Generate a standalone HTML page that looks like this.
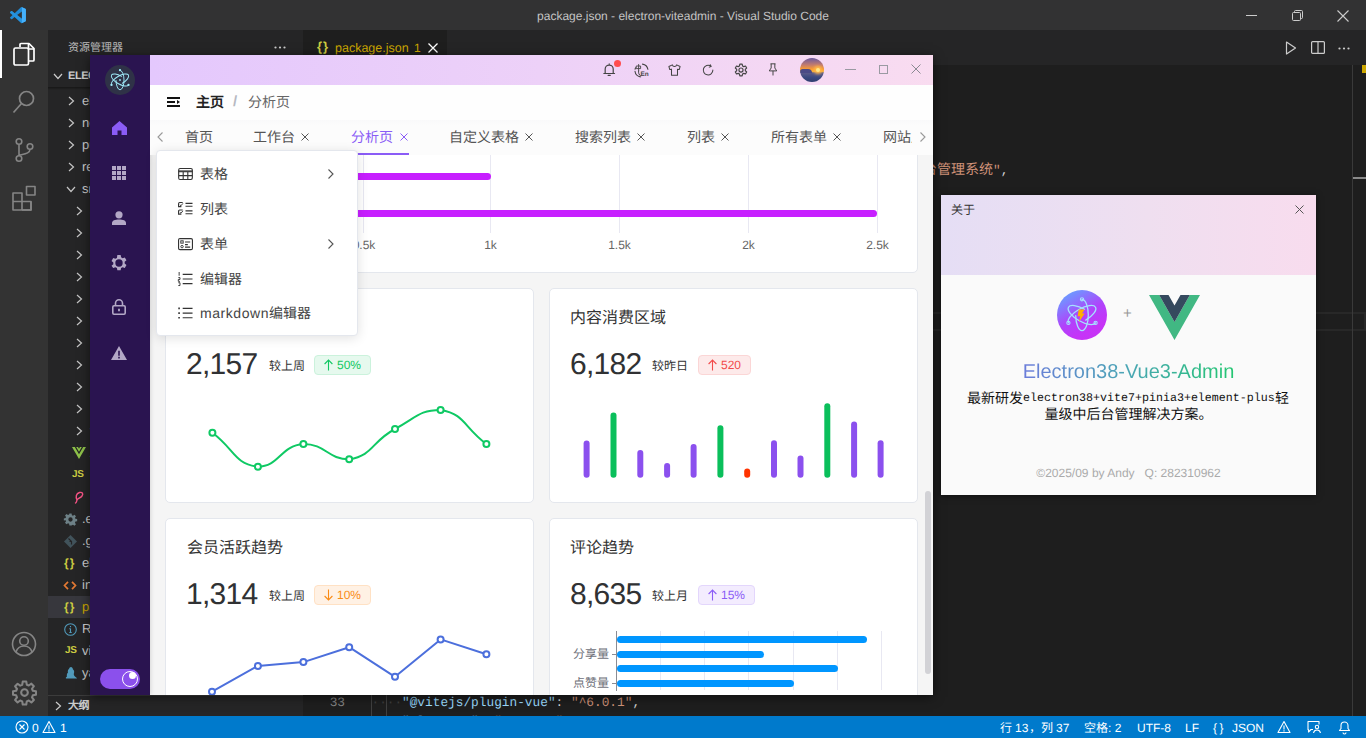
<!DOCTYPE html>
<html lang="zh-CN">
<head>
<meta charset="utf-8">
<title>package.json - electron-viteadmin - Visual Studio Code</title>
<style>
*{box-sizing:border-box;margin:0;padding:0}
html,body{width:1366px;height:738px;overflow:hidden;background:#1e1e1e}
body{position:relative;font-family:"Liberation Sans",sans-serif;font-size:13px;color:#ccc;text-rendering:geometricPrecision}
.abs{position:absolute}
svg{display:block;overflow:visible}
/* ---------- VS Code chrome ---------- */
#titlebar{left:0;top:0;width:1366px;height:30px;background:#323233}
#title{left:0;top:0;width:1366px;height:30px;line-height:33px;text-align:center;font-size:12px;color:#c4c4c4;white-space:nowrap}
#activity{left:0;top:30px;width:48px;height:686px;background:#333333}
#activity .ind{left:0;top:0;width:2px;height:48px;background:#fff}
#sidebar{left:48px;top:30px;width:255px;height:686px;background:#252526;overflow:hidden}
#sidebar .hd{left:20px;top:10px;font-size:11px;line-height:16px;color:#bbbbbb;white-space:nowrap}
#sidebar .sec{left:0;width:255px;height:22px;font-size:11px;letter-spacing:-.45px;font-weight:bold;color:#cccccc;line-height:22px;white-space:nowrap}
.row{position:absolute;left:0;width:255px;height:22px;line-height:22px;font-size:13px;color:#cccccc;white-space:nowrap}
.row .t{position:absolute;left:34px;top:0}
.row.sel{background:#37373d}
.chev{position:absolute;top:6px;width:10px;height:10px}
#tabsbar{left:303px;top:30px;width:1063px;height:35px;background:#252526}
#tab1{left:0;top:0;width:144px;height:35px;background:#1e1e1e}
#editor{left:303px;top:65px;width:1063px;height:651px;background:#1e1e1e;overflow:hidden}
.code{position:absolute;font-family:"Liberation Mono",monospace;font-size:12.8px;line-height:19px;white-space:pre;height:19px}
#status{left:0;top:716px;width:1366px;height:22px;background:#007acc;color:#fff;font-size:12px;line-height:22px;white-space:nowrap}
#status span{position:absolute;top:1px}
</style>
</head>
<body>

<!-- ================= VS CODE ================= -->
<div id="titlebar" class="abs"></div>
<div id="title" class="abs">package.json - electron-viteadmin - Visual Studio Code</div>
<!-- vscode logo -->
<svg class="abs" style="left:10px;top:7px" width="15.900" height="16.200" viewBox="0 0 100 100" preserveAspectRatio="none"><path fill="#1f8ad6" d="M96.500 10.800 75.900.9a6.200 6.200 0 0 0-7.100 1.200L29.400 38 12.200 25a4.200 4.200 0 0 0-5.300.2l-5.500 5a4.200 4.200 0 0 0 0 6.200L16.300 50 1.400 63.600a4.200 4.200 0 0 0 0 6.200l5.500 5a4.200 4.200 0 0 0 5.300.2l17.200-13 39.400 35.900a6.200 6.200 0 0 0 7.100 1.200l20.600-9.900a6.200 6.200 0 0 0 3.500-5.600V16.400a6.200 6.200 0 0 0-3.500-5.600zM75 72.700 45.100 50 75 27.300z"/><path fill="#2a9bea" d="M29.400 62 68.800 97.900a6.200 6.200 0 0 0 7.100 1.200L75 72.700 45.100 50 29.400 38 12.200 25a4.200 4.200 0 0 0-5.300.2l-5.500 5a4.200 4.200 0 0 0 0 6.200z" opacity=".55"/><path fill="#45b0fb" d="M75 .6a6.200 6.200 0 0 1 .9.300l20.600 9.900a6.200 6.200 0 0 1 3.500 5.600v67.200a6.200 6.200 0 0 1-3.500 5.600l-20.600 9.900a6.200 6.200 0 0 1-.9.300z"/></svg>
<!-- window controls -->
<svg class="abs" style="left:1246px;top:15px" width="11" height="1"><rect width="11" height="1" fill="#ccc"/></svg>
<svg class="abs" style="left:1292px;top:10px" width="11" height="11" viewBox="0 0 11 11" fill="none" stroke="#ccc" stroke-width="1"><rect x=".5" y="2.500" width="8" height="8" rx="1"/><path d="M2.500 2.500V1.500a1 1 0 0 1 1-1h6a1 1 0 0 1 1 1v6a1 1 0 0 1-1 1h-1"/></svg>
<svg class="abs" style="left:1337px;top:10px" width="12" height="12" viewBox="0 0 12 12" stroke="#ccc" stroke-width="1.1"><path d="M.5.5l11 11M11.500.5l-11 11"/></svg>

<!-- activity bar -->
<div id="activity" class="abs">
  <div class="ind abs"></div>
  <!-- files -->
  <svg class="abs" style="left:12px;top:11px" width="24" height="26" viewBox="0 0 24 26" fill="none" stroke="#fff" stroke-width="1.700" stroke-linejoin="round"><path d="M8 6V3.500a1 1 0 0 1 1-1h8l5 5v11.500a1 1 0 0 1-1 1h-4"/><path d="M16.500 2.500v5.500h5.500"/><rect x="2" y="7" width="14.500" height="17" rx="1.500"/></svg>
  <!-- search -->
  <svg class="abs" style="left:12px;top:59px" width="24" height="26" viewBox="0 0 24 26" fill="none" stroke="#858585" stroke-width="1.700"><circle cx="14.500" cy="9.500" r="7"/><path d="M9.500 14.500 1.500 23.500"/></svg>
  <!-- scm -->
  <svg class="abs" style="left:12px;top:107px" width="24" height="26" viewBox="0 0 24 26" fill="none" stroke="#858585" stroke-width="1.600"><circle cx="7" cy="4.500" r="2.800"/><circle cx="7" cy="21.500" r="2.800"/><circle cx="18" cy="9.500" r="2.800"/><path d="M7 7.300v11.400M18 12.300c0 4-5 4.500-11 6"/></svg>
  <!-- extensions -->
  <svg class="abs" style="left:11px;top:155px" width="26" height="26" viewBox="0 0 26 26" fill="none" stroke="#858585" stroke-width="1.600" stroke-linejoin="round"><path d="M2 8h9v17H2zM2 16.500h18V25H11M11 16.500V25"/><rect x="15.500" y="1.500" width="8.500" height="8.500"/><path d="M20 16.500V25h-9"/></svg>
  <!-- account -->
  <svg class="abs" style="left:11px;top:601px" width="26" height="26" viewBox="0 0 26 26" fill="none" stroke="#858585" stroke-width="1.600"><circle cx="13" cy="13" r="11.500"/><circle cx="13" cy="10" r="4.300"/><path d="M5 21c1.500-4.500 4.500-6 8-6s6.500 1.500 8 6"/></svg>
  <!-- gear -->
  <svg class="abs" style="left:11.500px;top:649.500px" width="25" height="25" viewBox="0 0 24 24" fill="none" stroke="#858585" stroke-width="2" stroke-linejoin="round"><circle cx="12" cy="12" r="3.200"/><path d="M10.300 1.500h3.400l.5 3 1.900.8 2.500-1.800 2.400 2.400-1.800 2.500.8 1.900 3 .5v3.400l-3 .5-.8 1.900 1.800 2.500-2.400 2.400-2.500-1.800-1.900.8-.5 3h-3.400l-.5-3-1.900-.8-2.500 1.800-2.400-2.400 1.800-2.500-.8-1.900-3-.5v-3.400l3-.5.800-1.900L3 6l2.400-2.400 2.500 1.800 1.900-.8z"/></svg>
</div>

<!-- side bar (explorer) -->
<div id="sidebar" class="abs">
  <div class="hd abs">资源管理器</div>
  <svg class="abs" style="left:226px;top:16px" width="12" height="3"><circle cx="1.500" cy="1.500" r="1.100" fill="#ccc"/><circle cx="6" cy="1.500" r="1.100" fill="#ccc"/><circle cx="10.500" cy="1.500" r="1.100" fill="#ccc"/></svg>
  <div class="sec abs" style="top:35px"><svg class="chev" style="left:5px" viewBox="0 0 10 10" fill="none" stroke="#ccc" stroke-width="1.200"><path d="M1 3l4 4.500L9 3"/></svg><span class="abs" style="left:20px">ELECTRON-VITEADMIN</span></div>
  <div class="abs" style="left:0;top:57px;width:255px;height:3px;background:linear-gradient(#0006,#0000)"></div>
  <div class="row" style="top:60px"><svg class="chev" style="left:18px" viewBox="0 0 10 10" fill="none" stroke="#c5c5c5" stroke-width="1.200"><path d="M3 1l4.500 4L3 9"/></svg><span class="t">electron</span></div>
  <div class="row" style="top:82px"><svg class="chev" style="left:18px" viewBox="0 0 10 10" fill="none" stroke="#c5c5c5" stroke-width="1.200"><path d="M3 1l4.500 4L3 9"/></svg><span class="t">node_modules</span></div>
  <div class="row" style="top:104px"><svg class="chev" style="left:18px" viewBox="0 0 10 10" fill="none" stroke="#c5c5c5" stroke-width="1.200"><path d="M3 1l4.500 4L3 9"/></svg><span class="t">public</span></div>
  <div class="row" style="top:126px"><svg class="chev" style="left:18px" viewBox="0 0 10 10" fill="none" stroke="#c5c5c5" stroke-width="1.200"><path d="M3 1l4.500 4L3 9"/></svg><span class="t">resources</span></div>
  <div class="row" style="top:148px"><svg class="chev" style="left:18px" viewBox="0 0 10 10" fill="none" stroke="#c5c5c5" stroke-width="1.200"><path d="M1 3l4 4.500L9 3"/></svg><span class="t">src</span></div>
  <div class="row" style="top:170px"><svg class="chev" style="left:26px" viewBox="0 0 10 10" fill="none" stroke="#c5c5c5" stroke-width="1.200"><path d="M3 1l4.500 4L3 9"/></svg><span class="t" style="left:42px">api</span></div>
  <div class="row" style="top:192px"><svg class="chev" style="left:26px" viewBox="0 0 10 10" fill="none" stroke="#c5c5c5" stroke-width="1.200"><path d="M3 1l4.500 4L3 9"/></svg><span class="t" style="left:42px">assets</span></div>
  <div class="row" style="top:214px"><svg class="chev" style="left:26px" viewBox="0 0 10 10" fill="none" stroke="#c5c5c5" stroke-width="1.200"><path d="M3 1l4.500 4L3 9"/></svg><span class="t" style="left:42px">components</span></div>
  <div class="row" style="top:236px"><svg class="chev" style="left:26px" viewBox="0 0 10 10" fill="none" stroke="#c5c5c5" stroke-width="1.200"><path d="M3 1l4.500 4L3 9"/></svg><span class="t" style="left:42px">config</span></div>
  <div class="row" style="top:258px"><svg class="chev" style="left:26px" viewBox="0 0 10 10" fill="none" stroke="#c5c5c5" stroke-width="1.200"><path d="M3 1l4.500 4L3 9"/></svg><span class="t" style="left:42px">hooks</span></div>
  <div class="row" style="top:280px"><svg class="chev" style="left:26px" viewBox="0 0 10 10" fill="none" stroke="#c5c5c5" stroke-width="1.200"><path d="M3 1l4.500 4L3 9"/></svg><span class="t" style="left:42px">layouts</span></div>
  <div class="row" style="top:302px"><svg class="chev" style="left:26px" viewBox="0 0 10 10" fill="none" stroke="#c5c5c5" stroke-width="1.200"><path d="M3 1l4.500 4L3 9"/></svg><span class="t" style="left:42px">locale</span></div>
  <div class="row" style="top:324px"><svg class="chev" style="left:26px" viewBox="0 0 10 10" fill="none" stroke="#c5c5c5" stroke-width="1.200"><path d="M3 1l4.500 4L3 9"/></svg><span class="t" style="left:42px">router</span></div>
  <div class="row" style="top:346px"><svg class="chev" style="left:26px" viewBox="0 0 10 10" fill="none" stroke="#c5c5c5" stroke-width="1.200"><path d="M3 1l4.500 4L3 9"/></svg><span class="t" style="left:42px">store</span></div>
  <div class="row" style="top:368px"><svg class="chev" style="left:26px" viewBox="0 0 10 10" fill="none" stroke="#c5c5c5" stroke-width="1.200"><path d="M3 1l4.500 4L3 9"/></svg><span class="t" style="left:42px">utils</span></div>
  <div class="row" style="top:390px"><svg class="chev" style="left:26px" viewBox="0 0 10 10" fill="none" stroke="#c5c5c5" stroke-width="1.200"><path d="M3 1l4.500 4L3 9"/></svg><span class="t" style="left:42px">views</span></div>
  <div class="row" style="top:412px"><svg class="abs" style="left:24px;top:5px" width="14" height="12" viewBox="0 0 14 12"><path fill="#8dc149" d="M0 0h2.800L7 7.200 11.200 0H14L7 12z"/><path fill="#8dc149" d="M4.200 0H6L7 1.800 8 0h1.800L7 4.800z"/></svg><span class="t" style="left:42px">App.vue</span></div>
  <div class="row" style="top:434px"><span class="abs" style="left:24px;top:0;font-size:10px;font-weight:bold;color:#cbcb41;letter-spacing:-.3px">JS</span><span class="t" style="left:42px">main.js</span></div>
  <div class="row" style="top:456px"><svg class="abs" style="left:26px;top:5px" width="10" height="13" viewBox="0 0 10 13" fill="none" stroke="#f55385" stroke-width="1.400" stroke-linecap="round"><path d="M3 9C1.500 6 2 2.500 5.500 1.500 8.500.8 9.500 3 8 5 6.500 7 3.500 7.500 3 9c-.5 1.500-.5 3-1.500 3"/></svg><span class="t" style="left:42px">style.scss</span></div>
  <div class="row" style="top:478px"><svg class="abs" style="left:16px;top:5px" width="13" height="13" viewBox="0 0 24 24"><path fill="#6d8086" fill-rule="evenodd" d="M10 1h4l.6 3.200 2 .9 2.700-1.900 2.800 2.800-1.900 2.700.9 2 3.200.6v4l-3.200.6-.9 2 1.900 2.700-2.800 2.800-2.700-1.900-2 .9L14 23h-4l-.6-3.200-2-.9-2.700 1.900-2.800-2.800 1.900-2.700-.9-2L-.3 14v-4l3.200-.6.900-2L1.900 4.700 4.700 1.900l2.700 1.900 2-.9zM12 8a4 4 0 1 0 0 8 4 4 0 0 0 0-8z"/></svg><span class="t" style="color:#cccccc">.editorconfig</span></div>
  <div class="row" style="top:500px"><svg class="abs" style="left:16px;top:5px" width="13" height="13" viewBox="0 0 13 13"><path fill="#41535b" d="M6.500 0L13 6.500 6.500 13 0 6.500z"/><path stroke="#252526" stroke-width="1.200" fill="none" d="M4.500 3.500l3 3v3M7.500 6.500h-2"/></svg><span class="t" style="color:#cccccc">.gitignore</span></div>
  <div class="row" style="top:522px"><span class="abs" style="left:16px;top:0;font-size:12px;font-weight:bold;color:#cbcb41;letter-spacing:1px">{}</span><span class="t" style="color:#cccccc">electron-builder.json</span></div>
  <div class="row" style="top:544px"><svg class="abs" style="left:15px;top:7px" width="14" height="9" viewBox="0 0 14 9" fill="none" stroke="#e37933" stroke-width="1.700"><path d="M5 .8L1.500 4.500 5 8.200M9 .8l3.500 3.700L9 8.200"/></svg><span class="t" style="color:#cccccc">index.html</span></div>
  <div class="row sel" style="top:566px"><span class="abs" style="left:16px;top:0;font-size:12px;font-weight:bold;color:#cbcb41;letter-spacing:1px">{}</span><span class="t" style="color:#cca700">package.json</span></div>
  <div class="row" style="top:588px"><svg class="abs" style="left:16px;top:5px" width="13" height="13" viewBox="0 0 13 13" fill="none" stroke="#519aba" stroke-width="1.100"><circle cx="6.500" cy="6.500" r="5.800"/><path d="M6.500 5.500v4M5.300 5.800h1.200M5.300 9.500h2.400M6.500 3v1.200" /></svg><span class="t" style="color:#cccccc">README.md</span></div>
  <div class="row" style="top:610px"><span class="abs" style="left:17px;top:0;font-size:10px;font-weight:bold;color:#cbcb41;letter-spacing:-.3px">JS</span><span class="t" style="color:#cccccc">vite.config.js</span></div>
  <div class="row" style="top:632px"><svg class="abs" style="left:17px;top:5px" width="12" height="13" viewBox="0 0 12 13"><path fill="#519aba" d="M6 0c1 0 1.800 1 2 2.500C9 3 9.500 4.500 9 6c-.3 1-.3 2 .5 3 1 1.200 2 1.500 2.500 2.500H1C.5 11 1 10 2 9.500 1.500 8 2 6.500 3 5.500 2.500 4 3 2.500 4 2 4.300.8 5 0 6 0z"/></svg><span class="t" style="color:#cccccc">yarn.lock</span></div>
  <div class="abs" style="left:0;top:665px;width:255px;height:1px;background:#3c3c3c"></div>
  <div class="sec abs" style="top:665px"><svg class="chev" style="left:5px" viewBox="0 0 10 10" fill="none" stroke="#ccc" stroke-width="1.200"><path d="M3 1l4.500 4L3 9"/></svg><span class="abs" style="left:20px">大纲</span></div>
</div>

<!-- editor tabs -->
<div id="tabsbar" class="abs">
  <div id="tab1" class="abs">
    <span class="abs" style="left:14px;top:9px;font-size:13px;font-weight:bold;color:#cbcb41;line-height:16px;letter-spacing:1px">{}</span>
    <span class="abs" style="left:32px;top:10px;font-size:12.500px;color:#cca700;line-height:16px;white-space:nowrap">package.json</span>
    <span class="abs" style="left:111px;top:10px;font-size:12px;color:#cca700;line-height:16px">1</span>
    <svg class="abs" style="left:125px;top:13px" width="10" height="10" stroke="#fff" stroke-width="1.300"><path d="M.5.5l9 9M9.500.5l-9 9"/></svg>
  </div>
  <!-- editor actions -->
  <svg class="abs" style="left:982px;top:11px" width="12" height="14" fill="none" stroke="#ccc" stroke-width="1.200" stroke-linejoin="round"><path d="M1.500 1l9 6-9 6z"/></svg>
  <svg class="abs" style="left:1008px;top:11px" width="14" height="13" fill="none" stroke="#ccc" stroke-width="1.200"><rect x=".6" y=".6" width="12.800" height="11.800" rx="1"/><path d="M7 .6v11.800"/></svg>
  <svg class="abs" style="left:1035px;top:17px" width="12" height="3"><circle cx="1.500" cy="1.500" r="1.100" fill="#ccc"/><circle cx="6" cy="1.500" r="1.100" fill="#ccc"/><circle cx="10.500" cy="1.500" r="1.100" fill="#ccc"/></svg>
</div>

<!-- editor -->
<div id="editor" class="abs">
  <!-- current line highlight -->
  <div class="abs" style="left:0;top:247px;width:1063px;height:19px;border:2px solid #282828"></div>
  <!-- overview ruler -->
  <div class="abs" style="left:1049px;top:0;width:1px;height:651px;background:#3a3a3a"></div>
  <div class="abs" style="left:1059px;top:0;width:4px;height:8px;background:#cca700"></div>
  <div class="abs" style="left:1050px;top:112px;width:13px;height:2px;background:#8a8a8a"></div>
  <!-- line 5 -->
  <div class="code" style="left:620px;top:96px;color:#ce9178"><span style="font-size:14px;line-height:19px">台管理系统</span>"<span style="color:#d4d4d4">,</span></div>
  <!-- line 33 -->
  <div class="code" style="left:0;top:628px;width:42px;text-align:right;color:#858585">33</div>
  <div class="abs" style="left:68px;top:627px;width:1px;height:24px;background:#404040"></div>
  <div class="abs" style="left:83px;top:627px;width:1px;height:24px;background:#404040"></div>
  <div class="code" style="left:68.500px;top:628px;color:#3e3e3e">····</div>
  <div class="code" style="left:99px;top:628px;color:#9cdcfe">"@vitejs/plugin-vue"<span style="color:#d4d4d4">: </span><span style="color:#ce9178">"^6.0.1"</span><span style="color:#d4d4d4">,</span></div>
  <div class="code" style="left:99px;top:647px;color:#9cdcfe">"electron"<span style="color:#d4d4d4">: </span><span style="color:#ce9178">"^38.0.0"</span><span style="color:#d4d4d4">,</span></div>
</div>

<!-- status bar -->
<div id="status" class="abs">
  <svg class="abs" style="left:15px;top:4px" width="14" height="14" fill="none" stroke="#fff" stroke-width="1.100"><circle cx="7" cy="7" r="6"/><path d="M4.500 4.500l5 5M9.500 4.500l-5 5"/></svg>
  <span style="left:32px">0</span>
  <svg class="abs" style="left:42px;top:4px" width="14" height="14" fill="none" stroke="#fff" stroke-width="1.100" stroke-linejoin="round"><path d="M7 1.500L13 12.500H1z"/><path d="M7 5.500v4M7 10.300v1.200"/></svg>
  <span style="left:60px">1</span>
  <span style="left:1000px">行</span><span style="left:1015px">13</span><span style="left:1029px">，</span><span style="left:1041px">列</span><span style="left:1056px">37</span>
  <span style="left:1084px">空格</span><span style="left:1108px">: 2</span>
  <span style="left:1137px">UTF-8</span>
  <span style="left:1185px">LF</span>
  <span style="left:1213px;letter-spacing:2.500px;font-size:12px">{}</span>
  <span style="left:1232px">JSON</span>
  <svg class="abs" style="left:1277px;top:4px" width="14" height="14" fill="none" stroke="#fff" stroke-width="1.100" stroke-linejoin="round"><path d="M7 1.500L13 12.500H1z"/><path d="M7 5.500v4M7 10.300v1.200"/></svg>
  <svg class="abs" style="left:1307px;top:4px" width="15" height="14" fill="none" stroke="#fff" stroke-width="1.100" stroke-linejoin="round"><path d="M6 9.500H4l-2.500 2.500V9.500H1V1.500h11v3"/><circle cx="10" cy="7" r="1.700"/><path d="M6.500 13c.5-2.500 2-3 3.500-3s3 .5 3.500 3"/></svg>
  <svg class="abs" style="left:1338px;top:4px" width="13" height="14" fill="none" stroke="#fff" stroke-width="1.100" stroke-linejoin="round"><path d="M1.500 10.500h10l-1.500-2V5.500a3.500 3.500 0 0 0-7 0v3z"/><path d="M5 12.500a1.500 1.500 0 0 0 3 0"/></svg>
</div>

<!-- ================= ELECTRON APP WINDOW ================= -->
<style>
#app{left:90px;top:55px;width:843px;height:640px;background:#f5f5f5;overflow:hidden;box-shadow:0 2px 10px rgba(0,0,0,.55);color:#333}
#aside{left:0;top:0;width:60px;height:640px;background:#2a1450;box-shadow:1px 0 4px rgba(0,0,0,.12)}
#topbar{left:60px;top:0;width:783px;height:30px;background:linear-gradient(90deg,#e4c8fd 0%,#edd1f8 50%,#f9dcf0 100%)}
#crumb{left:60px;top:30px;width:783px;height:35px;background:#fefefe}
#tabs{left:60px;top:65px;width:783px;height:35px;background:linear-gradient(#f9f9fa,#fcfcfc 5px);font-size:14px;color:#555;white-space:nowrap}
#tabs .tb{position:absolute;top:8px;line-height:18px;height:18px}
#tabs .x{position:absolute;top:12.500px;width:8px;height:8px}
.card{position:absolute;background:#fff;border:1px solid #e4e7ed;border-radius:5px}
.card.l>*{margin-left:1px}
.ctitle{position:absolute;left:20px;top:20px;font-size:16px;line-height:20px;color:#333;white-space:nowrap}
.cnum{position:absolute;left:19px;top:58px;font-size:30px;line-height:36px;color:#303133;white-space:nowrap;letter-spacing:-.75px}
.csub{position:absolute;top:69px;font-size:12px;line-height:16px;color:#333;white-space:nowrap}
.tag{position:absolute;top:66px;height:20px;border-radius:4px;border:1px solid;font-size:12px;line-height:18px;text-align:center;white-space:nowrap}
#menu{left:66px;top:95px;width:202px;height:186px;background:#fff;border:1px solid #e4e7ed;border-radius:4px;box-shadow:0 2px 12px rgba(0,0,0,.12)}
#menu .mi{position:absolute;left:43px;font-size:14px;line-height:18px;color:#444;white-space:nowrap}
#menu .ic{position:absolute;left:21px}
.card.r .cnum,.card.r>svg{margin-left:1px}
.axl{position:absolute;font-size:12px;line-height:14px;color:#666;white-space:nowrap;text-align:center;width:40px}
</style>
<div id="app" class="abs">
  <!-- content cards -->
  <!-- card A (top, partially scrolled) -->
  <div class="card l" style="left:75px;top:-40px;width:753px;height:258px">
    <div class="abs" style="left:196px;top:130px;width:1px;height:87px;background:#e8e8f2"></div>
    <div class="abs" style="left:323px;top:130px;width:1px;height:87px;background:#e8e8f2"></div>
    <div class="abs" style="left:452px;top:130px;width:1px;height:87px;background:#e8e8f2"></div>
    <div class="abs" style="left:581px;top:130px;width:1px;height:87px;background:#e8e8f2"></div>
    <div class="abs" style="left:710px;top:130px;width:1px;height:87px;background:#e8e8f2"></div>
    <div class="abs" style="left:60px;top:156.500px;width:263.500px;height:7px;border-radius:3.500px;background:#c71fff"></div>
    <div class="abs" style="left:60px;top:194px;width:650px;height:7px;border-radius:3.500px;background:#c71fff"></div>
    <div class="axl" style="left:177px;top:222px">0.5k</div>
    <div class="axl" style="left:303.500px;top:222px">1k</div>
    <div class="axl" style="left:432.500px;top:222px">1.5k</div>
    <div class="axl" style="left:561.500px;top:222px">2k</div>
    <div class="axl" style="left:690.500px;top:222px">2.5k</div>
  </div>
  <!-- card B -->
  <div class="card l" style="left:75px;top:233px;width:369px;height:215px">
    <div class="ctitle">访问量趋势</div>
    <div class="cnum">2,157</div>
    <div class="csub" style="left:102px">较上周</div>
    <div class="tag" style="left:147px;width:57px;background:#e6f9ee;border-color:#cbf2dc;color:#10c862"><svg style="display:inline-block;vertical-align:-1.500px;margin-right:4px" width="9" height="12" viewBox="0 0 9 12" fill="none" stroke="currentColor" stroke-width="1.100"><path d="M4.500 11.500V1M.6 5L4.500 1l3.900 4"/></svg>50%</div>
    <svg class="abs" style="left:0;top:100px" width="366" height="100" fill="none" stroke="#0fc964" stroke-width="2">
      <path d="M45.4 43.8C68.1 60.8 66.9 74.7 90.9 77.7C112.4 77.7 113.0 56.9 136.4 55.0C158.6 55.0 160.8 70.3 182.2 70.3C206.6 66.3 203.9 53.0 228.0 40.0C249.6 28.3 252.4 21.0 273.6 21.0C298.1 25.0 296.5 38.0 319.4 55.0"/>
      <g fill="#fff"><circle cx="45.4" cy="43.8" r="3"/><circle cx="90.9" cy="77.7" r="3"/><circle cx="136.4" cy="55.0" r="3"/><circle cx="182.2" cy="70.3" r="3"/><circle cx="228.0" cy="40.0" r="3"/><circle cx="273.6" cy="21.0" r="3"/><circle cx="319.4" cy="55.0" r="3"/></g>
    </svg>
  </div>
  <!-- card C -->
  <div class="card r" style="left:459px;top:233px;width:369px;height:215px">
    <div class="ctitle">内容消费区域</div>
    <div class="cnum">6,182</div>
    <div class="csub" style="left:102px">较昨日</div>
    <div class="tag" style="left:148px;width:53px;background:#fdeaea;border-color:#fbd6d6;color:#f24a4a"><svg style="display:inline-block;vertical-align:-1.500px;margin-right:4px" width="9" height="12" viewBox="0 0 9 12" fill="none" stroke="currentColor" stroke-width="1.100"><path d="M4.500 11.500V1M.6 5L4.500 1l3.900 4"/></svg>520</div>
    <svg class="abs" style="left:0;top:100px" width="366" height="100" stroke-width="6" stroke-linecap="round" fill="none">
      <g stroke="#8b50ee"><path d="M35.600 54.600V85.700"/><path d="M89.300 63.900V85.700"/><path d="M116.100 77V85.700"/><path d="M142.600 58V85.700"/><path d="M223 54.300V85.700"/><path d="M249.500 69.500V85.700"/><path d="M303.100 35.500V85.700"/><path d="M329.600 54.300V85.700"/></g>
      <g stroke="#0abf5b"><path d="M62.500 26.500V85.700"/><path d="M169.400 39.300V85.700"/><path d="M276.300 17.200V85.700"/></g>
      <path stroke="#ff3300" d="M196.200 82.600V85.700"/>
    </svg>
  </div>
  <!-- card D -->
  <div class="card l" style="left:75px;top:463px;width:369px;height:215px">
    <div class="ctitle">会员活跃趋势</div>
    <div class="cnum">1,314</div>
    <div class="csub" style="left:102px">较上周</div>
    <div class="tag" style="left:147px;width:57px;background:#fff1e4;border-color:#ffe1c4;color:#fa8c16"><svg style="display:inline-block;vertical-align:-1.500px;margin-right:4px" width="9" height="12" viewBox="0 0 9 12" fill="none" stroke="currentColor" stroke-width="1.100"><path d="M4.500 .5V11M.6 7l3.900 4 3.900-4"/></svg>10%</div>
    <svg class="abs" style="left:0;top:100px" width="366" height="100" fill="none" stroke="#4c6fdc" stroke-width="2" stroke-linejoin="round">
      <path d="M45.0 72.7L90.9 46.9L136.4 43.1L182.2 28.2L228.0 57.8L273.6 20.4L319.4 35.3"/>
      <g fill="#fff"><circle cx="45.0" cy="72.7" r="3"/><circle cx="90.9" cy="46.9" r="3"/><circle cx="136.4" cy="43.1" r="3"/><circle cx="182.2" cy="28.2" r="3"/><circle cx="228.0" cy="57.8" r="3"/><circle cx="273.6" cy="20.4" r="3"/><circle cx="319.4" cy="35.3" r="3"/></g>
    </svg>
  </div>
  <!-- card E -->
  <div class="card r" style="left:459px;top:463px;width:369px;height:215px">
    <div class="ctitle">评论趋势</div>
    <div class="cnum">8,635</div>
    <div class="csub" style="left:102px">较上月</div>
    <div class="tag" style="left:148px;width:57px;background:#f3ecfe;border-color:#e3d6fc;color:#8b5cf6"><svg style="display:inline-block;vertical-align:-1.500px;margin-right:4px" width="9" height="12" viewBox="0 0 9 12" fill="none" stroke="currentColor" stroke-width="1.100"><path d="M4.500 11.500V1M.6 5L4.500 1l3.900 4"/></svg>15%</div>
    <div class="abs" style="left:66px;top:112px;width:1px;height:60px;background:#8a8c94"></div>
    <div class="abs" style="left:110px;top:112px;width:1px;height:59px;background:#e8e8f2"></div>
    <div class="abs" style="left:154px;top:112px;width:1px;height:59px;background:#e8e8f2"></div>
    <div class="abs" style="left:198px;top:112px;width:1px;height:59px;background:#e8e8f2"></div>
    <div class="abs" style="left:243px;top:112px;width:1px;height:59px;background:#e8e8f2"></div>
    <div class="abs" style="left:287px;top:112px;width:1px;height:59px;background:#e8e8f2"></div>
    <div class="abs" style="left:331px;top:112px;width:1px;height:59px;background:#e8e8f2"></div>
    <div class="abs" style="left:67px;top:116.500px;width:250px;height:7px;border-radius:3.500px;background:#0096ff"></div>
    <div class="abs" style="left:67px;top:131.500px;width:147px;height:7px;border-radius:3.500px;background:#0096ff"></div>
    <div class="abs" style="left:67px;top:146px;width:221px;height:7px;border-radius:3.500px;background:#0096ff"></div>
    <div class="abs" style="left:67px;top:161px;width:177px;height:7px;border-radius:3.500px;background:#0096ff"></div>
    <div class="abs" style="left:9px;top:127px;width:50px;text-align:right;font-size:12px;line-height:16px;color:#6e7079;white-space:nowrap">分享量</div>
    <div class="abs" style="left:9px;top:156px;width:50px;text-align:right;font-size:12px;line-height:16px;color:#6e7079;white-space:nowrap">点赞量</div>
    <div class="abs" style="left:62px;top:135px;width:4px;height:1px;background:#8a8c94"></div>
    <div class="abs" style="left:62px;top:164px;width:4px;height:1px;background:#8a8c94"></div>
  </div>
  <!-- scrollbar -->
  <div class="abs" style="left:835px;top:436px;width:6px;height:183px;border-radius:3px;background:#d2d2d6"></div>

  <!-- aside -->
  <div id="aside" class="abs">
    <div class="abs" style="left:15px;top:10px;width:30px;height:30px;border-radius:15px;background:#2f3247"></div>
    <svg class="abs" style="left:19px;top:14px" width="22" height="22" viewBox="-11 -11 22 22" fill="none" stroke="#9feaf9" stroke-width=".95" stroke-linecap="round"><ellipse rx="9.800" ry="4" pathLength="100" stroke-dasharray="74 26" transform="rotate(-90)"/><ellipse rx="9.800" ry="4" pathLength="100" stroke-dasharray="74 26" transform="rotate(30)"/><ellipse rx="9.800" ry="4" pathLength="100" stroke-dasharray="74 26" transform="rotate(150)"/><circle r=".9" fill="#9feaf9" stroke="none"/><circle cx="8.500" cy="4.900" r="1.150" fill="#9feaf9" stroke="none"/><circle cx="-8.500" cy="4.900" r="1.150" fill="#9feaf9" stroke="none"/><circle cx="0" cy="-9.800" r="1.150" fill="#9feaf9" stroke="none"/></svg>
    <!-- home -->
    <svg class="abs" style="left:22px;top:66px" width="15" height="14" viewBox="0 0 15 14"><path fill="#8b5cf6" d="M7.500 0L15 6.500V14H9.500V9.500h-4V14H0V6.500z"/></svg>
    <!-- grid -->
    <svg class="abs" style="left:22px;top:111px" width="14" height="14" viewBox="0 0 14 14" fill="#b3a8c6"><rect width="4" height="4"/><rect x="5" width="4" height="4"/><rect x="10" width="4" height="4"/><rect y="5" width="4" height="4"/><rect x="5" y="5" width="4" height="4"/><rect x="10" y="5" width="4" height="4"/><rect y="10" width="4" height="4"/><rect x="5" y="10" width="4" height="4"/><rect x="10" y="10" width="4" height="4"/></svg>
    <!-- user -->
    <svg class="abs" style="left:22px;top:156px" width="14" height="14" viewBox="0 0 14 14" fill="#b3a8c6"><circle cx="7" cy="3.800" r="3.600"/><path d="M0 14v-2c0-2.500 3-3.500 7-3.500s7 1 7 3.500v2z"/></svg>
    <!-- gear -->
    <svg class="abs" style="left:21px;top:200px" width="16" height="16" viewBox="0 0 24 24"><path fill="#b3a8c6" fill-rule="evenodd" d="M9.500 0h5l.6 3.500 2.300 1.300L20.700 3.600l2.500 4.300-2.700 2.300v2.600l2.700 2.300-2.500 4.300-3.300-1.200-2.300 1.300-.6 3.500h-5l-.6-3.500-2.300-1.300-3.300 1.200L.8 16.100l2.700-2.300v-2.600L.8 8.900l2.500-4.300 3.300 1.200 2.300-1.300zM12 6.500a5.500 5.500 0 1 0 0 11 5.500 5.500 0 0 0 0-11z"/></svg>
    <!-- lock -->
    <svg class="abs" style="left:22px;top:244px" width="14" height="16" viewBox="0 0 14 16" fill="none" stroke="#b3a8c6" stroke-width="1.600"><rect x=".8" y="6.800" width="12.400" height="8.400" rx="1.200"/><path d="M3.500 6.800V4.300a3.500 3.500 0 0 1 7 0v2.500"/><path d="M7 9.800v2.400" stroke-width="1.800"/></svg>
    <!-- warning -->
    <svg class="abs" style="left:21px;top:291px" width="16" height="14" viewBox="0 0 16 14"><path fill="#b3a8c6" fill-rule="evenodd" d="M8 0l8 14H0zM7.200 4.800v5h1.600v-5zM7.200 10.800v1.600h1.600v-1.600z"/></svg>
    <!-- theme switch -->
    <div class="abs" style="left:10px;top:614px;width:40px;height:20px;border-radius:10px;background:#8b50ec"></div>
    <div class="abs" style="left:32px;top:616px;width:16px;height:16px;border-radius:8px;border:1.500px solid #fff;background:#8b50ec"></div>
    <div class="abs" style="left:39px;top:617px;width:7px;height:7px;border-radius:4px;background:#fff"></div>
  </div>

  <!-- top bar -->
  <div id="topbar" class="abs">
    <!-- bell -->
    <svg class="abs" style="left:453px;top:8px" width="12.400" height="13.400" viewBox="0 0 12 13" fill="none" stroke="#444" stroke-width="1.150" stroke-linecap="round" stroke-linejoin="round"><path d="M.8 10.200h10.400M2.100 10.200V5.900a3.900 3.900 0 0 1 7.800 0v4.300M6 2V.9M5 12.100h2"/></svg>
    <div class="abs" style="left:463.500px;top:4.500px;width:7px;height:7px;border-radius:4px;background:#ff4d4f"></div>
    <!-- globe En -->
    <svg class="abs" style="left:484px;top:8px" width="15" height="15" viewBox="0 0 15 15" fill="none" stroke="#444" stroke-width="1.100" stroke-linecap="round"><path d="M8.500 1.100A6.500 6.500 0 0 1 13.900 6.300M6.300 13.900A6.500 6.500 0 0 1 1 8.300M1.100 6.200A6.500 6.500 0 0 1 1.600 4.800M13.900 8.600"/><path d="M2.600 3h4v2.600h-4zM4.600 1.500v6" stroke-width=".9"/><path d="M4.600 7.700C4.200 10 5 12 6.800 13.200" stroke-width="1"/><text x="6.600" y="12.600" font-size="6.400" font-weight="bold" fill="#444" stroke="none" font-family="Liberation Sans, sans-serif">En</text></svg>
    <!-- shirt -->
    <svg class="abs" style="left:518px;top:9px" width="13" height="12" viewBox="0 0 15 14" fill="none" stroke="#444" stroke-width="1.200" stroke-linejoin="round"><path d="M5 1L1 3l1 3.500 2-.5v7h7V6l2 .5L14 3l-4-2c-.3 1.300-1.200 2-2.500 2S5.300 2.300 5 1z"/></svg>
    <!-- refresh -->
    <svg class="abs" style="left:552px;top:9px" width="12.200" height="12.200" viewBox="0 0 14 14" fill="none" stroke="#444" stroke-width="1.200" stroke-linecap="round"><path d="M12.500 7A5.500 5.500 0 1 1 10 2.400"/><path d="M9.500.8l1 2-2.200.8" stroke-linejoin="round"/></svg>
    <!-- gear -->
    <svg class="abs" style="left:584px;top:8px" width="14" height="14" viewBox="0 0 24 24" fill="none" stroke="#444" stroke-width="2" stroke-linejoin="round"><circle cx="12" cy="12" r="3.500"/><path d="M10 2h4l.6 3 2.200 1.200 2.900-1 2 3.500-2.300 2v2.600l2.300 2-2 3.500-2.900-1-2.200 1.200-.6 3h-4l-.6-3-2.200-1.200-2.900 1-2-3.500 2.300-2v-2.600l-2.300-2 2-3.500 2.900 1L9.400 5z"/></svg>
    <!-- pin -->
    <svg class="abs" style="left:618px;top:8px" width="10" height="13.300" viewBox="0 0 12 16" fill="none" stroke="#444" stroke-width="1.200" stroke-linejoin="round"><path d="M3 1h6M3.800 1v5L1.500 9.500h9L8.200 6V1M6 9.500V15"/></svg>
    <!-- avatar -->
    <div class="abs" style="left:650px;top:3px;width:24px;height:24px;border-radius:12px;overflow:hidden;background:linear-gradient(180deg,#6a5aa0 0%,#c07a70 28%,#ff9e2c 48%,#f7b03a 56%,#5a5a8a 62%,#3b4a80 80%,#2f3e70 100%)">
      <div class="abs" style="left:16px;top:10px;width:4px;height:4px;border-radius:2px;background:#ffe88a;box-shadow:0 0 3px 2px #ffb84a"></div>
      <div class="abs" style="left:0;top:11px;width:12px;height:4px;border-radius:4px 6px 0 0;background:#4a4a86"></div>
    </div>
    <!-- window controls -->
    <div class="abs" style="left:695px;top:14px;width:11px;height:1px;background:#9a9aa2"></div>
    <div class="abs" style="left:729px;top:10px;width:9px;height:9px;border:1px solid #9a9aa2"></div>
    <svg class="abs" style="left:761px;top:9px" width="10" height="10" stroke="#8a8a92" stroke-width="1"><path d="M.5.5l9 9M9.500.5l-9 9"/></svg>
  </div>

  <!-- breadcrumb -->
  <div id="crumb" class="abs">
    <svg class="abs" style="left:17px;top:12px" width="13" height="10" viewBox="0 0 13 10" fill="none" stroke="#111" stroke-width="2"><path d="M0 1h13M0 5h8M0 9h13"/><path d="M10 3l3 2-3 2z" fill="#111" stroke="none"/></svg>
    <span class="abs" style="left:46px;top:8px;font-size:14px;line-height:18px;font-weight:bold;color:#222;white-space:nowrap">主页</span>
    <span class="abs" style="left:83px;top:8px;font-size:15px;line-height:18px;font-weight:bold;color:#b6b9c2">/</span>
    <span class="abs" style="left:98px;top:8px;font-size:14px;line-height:18px;color:#666;white-space:nowrap">分析页</span>
  </div>

  <!-- tabs -->
  <div id="tabs" class="abs">
    <svg class="abs" style="left:7px;top:12px" width="6" height="10" fill="none" stroke="#999" stroke-width="1.100"><path d="M5.500.5L1 5l4.500 4.500"/></svg>
    <span class="tb" style="left:35px">首页</span>
    <span class="tb" style="left:103px">工作台</span><svg class="x" style="left:151px" stroke="#555" stroke-width="1"><path d="M.5.5l7 7M7.500.5l-7 7"/></svg>
    <span class="tb" style="left:201px;color:#8b5cf6">分析页</span><svg class="x" style="left:250px" stroke="#8b5cf6" stroke-width="1"><path d="M.5.5l7 7M7.500.5l-7 7"/></svg>
    <div class="abs" style="left:191px;top:32.500px;width:68px;height:2px;background:#8b5cf6"></div>
    <span class="tb" style="left:299px">自定义表格</span><svg class="x" style="left:375px" stroke="#555" stroke-width="1"><path d="M.5.5l7 7M7.500.5l-7 7"/></svg>
    <span class="tb" style="left:425px">搜索列表</span><svg class="x" style="left:487px" stroke="#555" stroke-width="1"><path d="M.5.5l7 7M7.500.5l-7 7"/></svg>
    <span class="tb" style="left:537px">列表</span><svg class="x" style="left:571px" stroke="#555" stroke-width="1"><path d="M.5.5l7 7M7.500.5l-7 7"/></svg>
    <span class="tb" style="left:621px">所有表单</span><svg class="x" style="left:683px" stroke="#555" stroke-width="1"><path d="M.5.5l7 7M7.500.5l-7 7"/></svg>
    <span class="tb" style="left:733px;width:29px;overflow:hidden">网站监控</span>
    <svg class="abs" style="left:770px;top:12px" width="6" height="10" fill="none" stroke="#999" stroke-width="1.100"><path d="M.5.5L5 5 .5 9.500"/></svg>
  </div>

  <!-- dropdown menu -->
  <div id="menu" class="abs">
    <svg class="ic" style="top:17px" width="15" height="12" viewBox="0 0 16 13" fill="none" stroke="#333" stroke-width="1.200"><rect x=".6" y=".6" width="14.800" height="11.800" rx="1.500"/><path d="M.6 4h14.800M.6 8.300h14.800M5.500 4v8.400M10.500 4v8.400"/><path d="M.6 3.300h14.800" stroke-width="1.400"/></svg>
    <span class="mi" style="top:14px">表格</span>
    <svg class="abs" style="left:171px;top:18px" width="6" height="10" fill="none" stroke="#555" stroke-width="1.100"><path d="M.5.5L5 5 .5 9.500"/></svg>

    <svg class="ic" style="top:51px" width="15" height="13.100" viewBox="0 0 16 14" fill="none" stroke="#333" stroke-width="1.200"><path d="M5 .6H1.800A1.200 1.200 0 0 0 .6 1.800V5h3M5 8.600H1.800A1.200 1.200 0 0 0 .6 9.800V13h3"/><path d="M2 3l1.200 1 2-2.500M2 11l1.200 1 2-2.500" stroke-width="1"/><path d="M8 1.500h7.500M8 4.500h7.500M8 9.500h7.500M8 12.500h7.500"/></svg>
    <span class="mi" style="top:49px">列表</span>

    <svg class="ic" style="top:87px" width="15" height="12.200" viewBox="0 0 16 13" fill="none" stroke="#333" stroke-width="1.200"><rect x=".6" y=".6" width="14.800" height="11.800" rx="1.500"/><rect x="3" y="3" width="2.500" height="2.500" stroke-width="1"/><circle cx="4.300" cy="9.200" r="1.300" stroke-width="1"/><path d="M7.500 4.300h5.500M7.500 7h3M7.500 9.700h5.500"/></svg>
    <span class="mi" style="top:84px">表单</span>
    <svg class="abs" style="left:171px;top:88px" width="6" height="10" fill="none" stroke="#555" stroke-width="1.100"><path d="M.5.5L5 5 .5 9.500"/></svg>

    <svg class="ic" style="top:121px" width="15" height="14" viewBox="0 0 16 15" fill="none" stroke="#333" stroke-width="1.200"><path d="M5 2.500h10.500M5 7.500h10.500M5 12.500h10.500"/><path d="M1.200 0v4M.3 6h1.800v2H.3v2h1.800M.3 11.500h1.800v3H.3" stroke-width="1"/></svg>
    <span class="mi" style="top:119px">编辑器</span>

    <svg class="ic" style="top:156px" width="15" height="12.200" viewBox="0 0 16 13" fill="none" stroke="#333" stroke-width="1.200"><path d="M5 1.500h10.500M5 6.500h10.500M5 11.500h10.500"/><path d="M.3 1.500h1.700M.3 6.500h1.700M.3 11.500h1.700" stroke-width="1.700"/></svg>
    <span class="mi" style="top:153px;letter-spacing:.55px">markdown<span style="letter-spacing:0">编辑器</span></span>
  </div>
</div>

<!-- /APP_WINDOW -->

<!-- ================= ABOUT DIALOG ================= -->
<style>
#about{left:941px;top:195px;width:375px;height:300px;background:#fafafa;overflow:hidden;box-shadow:0 1px 6px rgba(0,0,0,.5)}
#about .hd{left:0;top:0;width:375px;height:80px;background:linear-gradient(90deg,#e5def5 0%,#efdff0 55%,#f8dcee 100%)}
</style>
<div id="about" class="abs">
  <div class="hd abs"></div>
  <span class="abs" style="left:10px;top:7px;font-size:12px;line-height:16px;color:#333;white-space:nowrap">关于</span>
  <svg class="abs" style="left:354px;top:10px" width="9" height="9" stroke="#555" stroke-width="1"><path d="M.5.5l8 8M8.500.5l-8 8"/></svg>
  <!-- electron logo -->
  <div class="abs" style="left:116px;top:95px;width:50px;height:50px;border-radius:25px;background:linear-gradient(150deg,#58b4ff 0%,#7d84ff 22%,#b042fb 50%,#c634f7 75%,#c832f5 100%)"></div>
  <svg class="abs" style="left:123px;top:102px" width="36" height="36" viewBox="-18 -18 36 36" fill="none" stroke="#a4e2ff" stroke-width="1.300" stroke-linecap="round"><ellipse rx="15.600" ry="6.300" pathLength="100" stroke-dasharray="74 26" transform="rotate(-90)"/><ellipse rx="15.600" ry="6.300" pathLength="100" stroke-dasharray="74 26" transform="rotate(30)"/><ellipse rx="15.600" ry="6.300" pathLength="100" stroke-dasharray="74 26" transform="rotate(150)"/><circle cx="13.600" cy="7.900" r="1.600" stroke-width="1.100"/><circle cx="-13.600" cy="7.900" r="1.600" stroke-width="1.100"/><circle cx="0" cy="-15.700" r="1.600" stroke-width="1.100"/><path d="M-3.300-5.600h5.800l-2.400 4.200h2.600l-5.800 8.400 1.400-5.800h-2.600z" fill="#ffb000" stroke="none"/></svg>
  <span class="abs" style="left:182px;top:110px;font-size:15px;line-height:18px;color:#999">+</span>
  <!-- vue logo -->
  <svg class="abs" style="left:208px;top:100px" width="51" height="45" viewBox="0 0 51 44" preserveAspectRatio="none"><path fill="#41b883" d="M0 0h10.200L25.500 26.400 40.800 0H51L25.500 44z"/><path fill="#35495e" d="M10.200 0h9.300l6 10.300L31.500 0h9.300L25.500 26.400z"/></svg>
  <!-- title -->
  <div class="abs" style="left:0;top:165px;width:375px;text-align:center;font-size:20px;line-height:24px;white-space:nowrap"><span style="background:linear-gradient(90deg,#6b7cda 0%,#4aa6b4 50%,#24c672 100%);-webkit-background-clip:text;background-clip:text;color:transparent">Electron38-Vue3-Admin</span></div>
  <!-- description -->
  <div class="abs" style="left:26px;top:195px;width:56px;font-family:'Liberation Sans',sans-serif;font-size:14px;line-height:16px;color:#111;white-space:nowrap;overflow:hidden">最新研发</div>
  <div class="abs" style="left:82px;top:195px;width:252px;font-family:'Liberation Mono',monospace;font-size:11.670px;line-height:16px;color:#111;white-space:nowrap">electron38+vite7+pinia3+element-plus</div>
  <div class="abs" style="left:334px;top:195px;width:14px;font-family:'Liberation Sans',sans-serif;font-size:14px;line-height:16px;color:#111;white-space:nowrap;overflow:hidden">轻</div>
  <div class="abs" style="left:0;top:211px;width:375px;text-align:center;font-family:'Liberation Sans',sans-serif;font-size:14px;line-height:16px;color:#111;white-space:nowrap">量级中后台管理解决方案。</div>
  <!-- footer -->
  <div class="abs" style="left:0;top:270px;width:375px;text-align:center;font-size:12px;line-height:16px;color:#aaa;white-space:pre">©2025/09 by Andy   Q: 282310962</div>
</div>

<!-- /ABOUT_DIALOG -->

</body>
</html>
